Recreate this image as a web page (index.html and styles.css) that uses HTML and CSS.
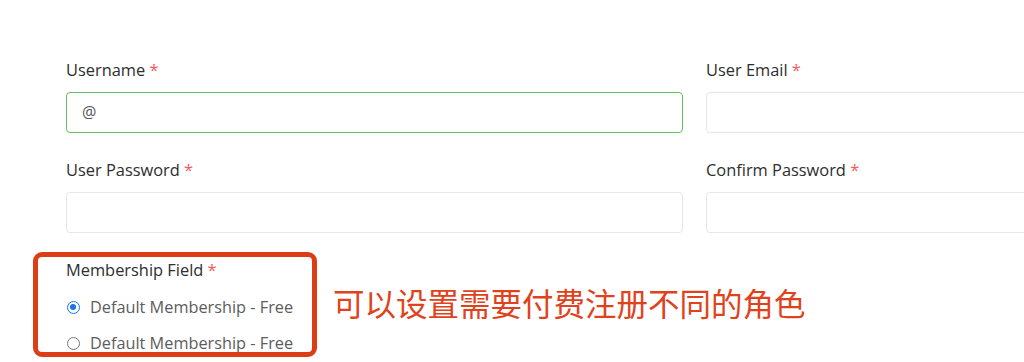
FILE: index.html
```html
<!DOCTYPE html>
<html lang="zh-CN">
<head>
<meta charset="utf-8">
<title>Register</title>
<link rel="stylesheet" href="styles.css">
</head>
<body>
<form class="form">
  <div class="grid">
    <div class="field">
      <label class="label">Username <span class="req">*</span></label>
      <div class="input input-valid">@</div>
    </div>
    <div class="field">
      <label class="label">User Email <span class="req">*</span></label>
      <div class="input"></div>
    </div>
    <div class="field">
      <label class="label">User Password <span class="req">*</span></label>
      <div class="input"></div>
    </div>
    <div class="field">
      <label class="label">Confirm Password <span class="req">*</span></label>
      <div class="input"></div>
    </div>
  </div>
  <div class="member-row">
    <div class="member">
      <label class="label">Membership Field <span class="req">*</span></label>
      <div class="radio-line"><span class="radio checked"></span><span class="radio-text">Default Membership - Free</span></div>
      <div class="radio-line"><span class="radio"></span><span class="radio-text">Default Membership - Free</span></div>
    </div>
    <div class="note">可以设置需要付费注册不同的角色</div>
  </div>
</form>
</body>
</html>
```
FILE: styles.css
```css
html, body {
  margin: 0;
  padding: 0;
  background: #ffffff;
  overflow: hidden;
}
body {
  width: 1024px;
  height: 362px;
  font-family: "Open Sans", "Noto Sans", sans-serif;
  font-size: 16px;
  color: #2b2b2b;
}
.form {
  padding: 58px 0 0 66px;
  overflow: hidden;
}
.grid {
  display: grid;
  grid-template-columns: 617px 617px;
  column-gap: 23px;
  row-gap: 25px;
}
.field {
  display: flex;
  flex-direction: column;
}
.label {
  display: block;
  line-height: 24px;
  font-size: 16.4px;
  font-weight: 500;
  color: #2e2e2e;
  margin-bottom: 10px;
}
.req {
  color: #f25c5c;
}
.input {
  box-sizing: border-box;
  height: 41px;
  border: 1px solid #e6e6e6;
  border-radius: 4px;
  padding: 0 15px;
  line-height: 39px;
  font-size: 16px;
  color: #555555;
  background: #ffffff;
}
.input-valid {
  border: 1.5px solid #62bf62;
}
.member-row {
  display: flex;
  align-items: flex-start;
  margin-top: 25px;
}
.member {
  position: relative;
}
.member::before {
  content: "";
  position: absolute;
  left: -33px;
  top: -6px;
  width: 274px;
  height: 95px;
  border: 5px solid #dd3d14;
  border-radius: 9px;
}
.member .label {
  margin-bottom: 7px;
}
.radio-line {
  display: flex;
  align-items: center;
  height: 36px;
  gap: 10px;
  padding-left: 1px;
}
.radio {
  box-sizing: border-box;
  width: 13px;
  height: 13px;
  border-radius: 50%;
  border: 1px solid #767676;
  background: #fff;
  position: relative;
}
.radio.checked {
  border: 1.5px solid #1a73e8;
}
.radio.checked::after {
  content: "";
  position: absolute;
  left: 2px;
  top: 2px;
  width: 6px;
  height: 6px;
  border-radius: 50%;
  background: #1a73e8;
}
.radio-text {
  color: #5c5c5c;
  font-size: 16.3px;
  line-height: 24px;
}
.note {
  margin-left: 40px;
  margin-top: 24px;
  font-family: "Noto Sans CJK SC", sans-serif;
  font-size: 31.5px;
  line-height: 40px;
  color: #e0421c;
  white-space: nowrap;
}
```
